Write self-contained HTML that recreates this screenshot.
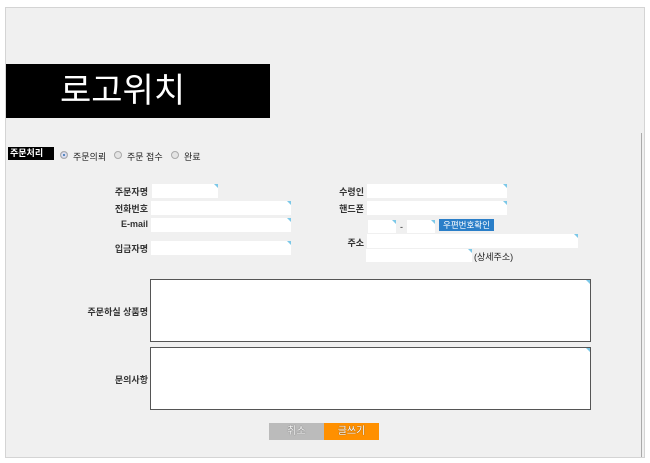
<!DOCTYPE html>
<html><head><meta charset="utf-8"><style>
*{margin:0;padding:0;box-sizing:border-box}
body{width:650px;height:463px;background:#fff;position:relative;font-family:"Liberation Sans","Noto Sans CJK KR",sans-serif;font-size:9px;color:#222;overflow:hidden}
.a{position:absolute}
.in{position:absolute;background:#fff;}
.in:after{content:"";position:absolute;right:0;top:0;border-top:4px solid #7cc8e8;border-left:4px solid transparent}
.lb{position:absolute;text-align:right;font-weight:bold;font-size:9px;color:#333}
.ta{position:absolute;background:#fff;border:1px solid #555}
.ta:after{content:"";position:absolute;right:0;top:0;border-top:4px solid #7cc8e8;border-left:4px solid transparent}
.rd{position:absolute;width:8px;height:8px;border-radius:50%;border:1px solid #aaa;background:#e4e4e4;top:151px}
</style></head><body>
<div class="a" style="left:5px;top:7px;width:640px;height:451px;background:#f0f0f0;border:1px solid #d4d4d4"></div>
<div class="a" style="left:641px;top:133px;width:1px;height:324px;background:#aaa"></div>
<div class="a" style="left:6px;top:64px;width:264px;height:54px;background:#000;color:#fff;font-size:34px;line-height:54px;padding-left:54px">로고위치</div>
<div class="a" style="left:8px;top:147px;width:46px;height:13px;background:#000;color:#fff;font-weight:bold;font-size:9px;line-height:13px;padding-left:2px">주문처리</div>
<div class="rd" style="left:60px;background:#2a6fb0;box-shadow:inset 0 0 0 2px #dde"></div>
<div class="a" style="left:73px;top:150px">주문의뢰</div>
<div class="rd" style="left:114px"></div>
<div class="a" style="left:127px;top:150px">주문 접수</div>
<div class="rd" style="left:171px"></div>
<div class="a" style="left:184px;top:150px">완료</div>

<div class="lb" style="left:80px;top:185px;width:68px">주문자명</div>
<div class="in" style="left:152px;top:184px;width:66px;height:14px"></div>
<div class="lb" style="left:80px;top:202px;width:68px">전화번호</div>
<div class="in" style="left:151px;top:201px;width:140px;height:14px"></div>
<div class="lb" style="left:80px;top:219px;width:68px">E-mail</div>
<div class="in" style="left:151px;top:218px;width:140px;height:14px"></div>
<div class="lb" style="left:80px;top:242px;width:68px">입금자명</div>
<div class="in" style="left:151px;top:241px;width:140px;height:14px"></div>

<div class="lb" style="left:300px;top:185px;width:64px">수령인</div>
<div class="in" style="left:367px;top:184px;width:140px;height:14px"></div>
<div class="lb" style="left:300px;top:202px;width:64px">핸드폰</div>
<div class="in" style="left:367px;top:201px;width:140px;height:14px"></div>
<div class="in" style="left:368px;top:220px;width:28px;height:13px"></div>
<div class="a" style="left:400px;top:222px">-</div>
<div class="in" style="left:407px;top:220px;width:28px;height:13px"></div>
<div class="a" style="left:439px;top:219px;width:55px;height:12px;background:#2a7ec8;color:#fff;font-size:8.5px;line-height:12px;text-align:center">우편번호확인</div>
<div class="lb" style="left:300px;top:236px;width:64px">주소</div>
<div class="in" style="left:367px;top:234px;width:211px;height:14px"></div>
<div class="in" style="left:366px;top:249px;width:106px;height:13px"></div>
<div class="a" style="left:474px;top:250px">(상세주소)</div>

<div class="lb" style="left:60px;top:305px;width:88px">주문하실 상품명</div>
<div class="ta" style="left:150px;top:279px;width:441px;height:63px"></div>
<div class="lb" style="left:60px;top:373px;width:88px">문의사항</div>
<div class="ta" style="left:150px;top:347px;width:441px;height:63px"></div>

<div class="a" style="left:269px;top:423px;width:55px;height:17px;background:#bbb;color:#fff;text-align:center;line-height:17px;font-size:10px;text-shadow:0 0 1px #333">취소</div>
<div class="a" style="left:324px;top:423px;width:55px;height:17px;background:#ff9000;color:#fff;text-align:center;line-height:17px;font-size:10px;text-shadow:0 0 1px #333">글쓰기</div>
</body></html>
